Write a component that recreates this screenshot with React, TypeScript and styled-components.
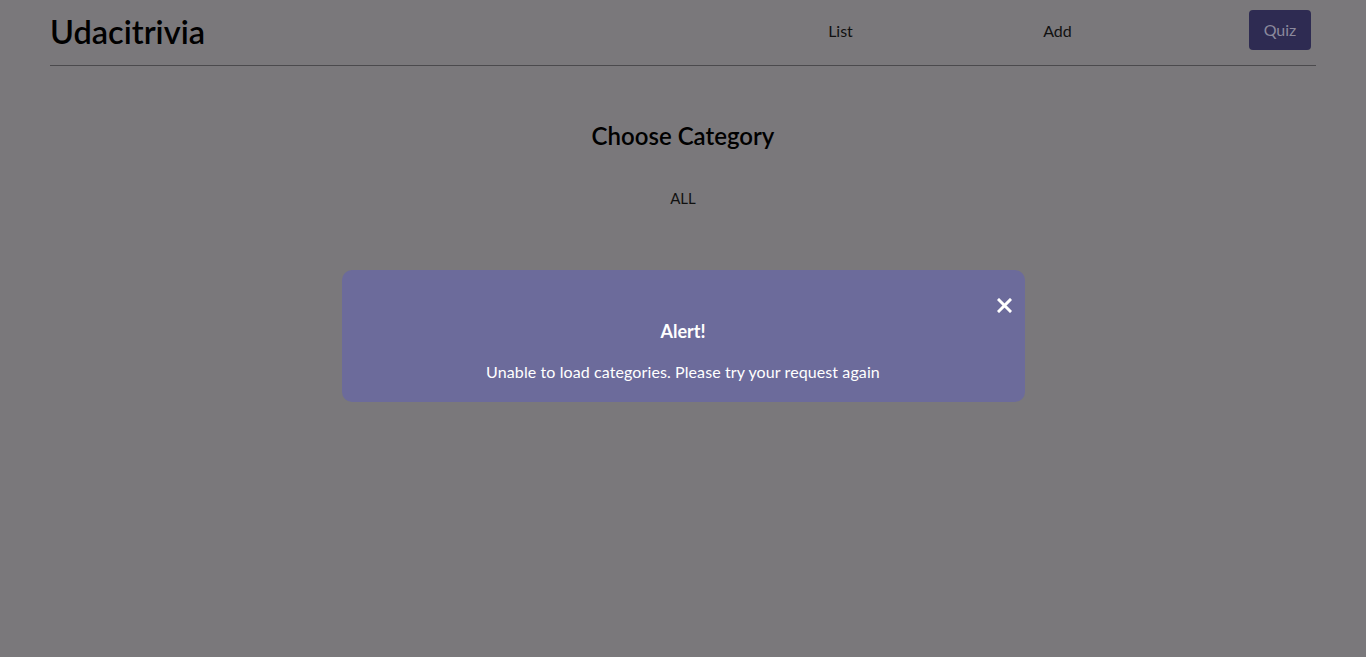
import React from "react";
import styled, { createGlobalStyle } from "styled-components";

const Global = createGlobalStyle`
  html, body { margin: 0; padding: 0; }
  body {
    background: #7a787b;
    font-family: "Lato", "Noto Sans", sans-serif;
    color: #000;
  }
`;

const Page = styled.div`
  min-height: 657px;
  padding: 0 50px;
`;

const Header = styled.header`
  display: flex;
  align-items: center;
  height: 65px;
  border-bottom: 1px solid #4b4a4d;
`;

const Brand = styled.h1`
  margin: 0;
  font-size: 32.5px;
  font-weight: 600;
  flex: 1;
  line-height: 1;
`;

const Nav = styled.nav`
  display: flex;
  align-items: center;
  margin-bottom: 4px;
`;

const NavLink = styled.span<{ $w: number }>`
  width: ${(p) => p.$w}px;
  text-align: center;
  font-size: 16px;
  color: #111;
`;

const QuizButton = styled.button`
  width: 62px;
  height: 40px;
  margin-left: 83px;
  margin-right: 5px;
  margin-bottom: 2px;
  border: none;
  border-radius: 4px;
  background: #2e2b52;
  color: #8b899c;
  font-family: inherit;
  font-size: 16px;
`;

const Main = styled.main`
  display: flex;
  flex-direction: column;
  align-items: center;
  padding-top: 55px;
`;

const Heading = styled.h2`
  margin: 0;
  font-size: 24px;
  font-weight: 600;
`;

const Category = styled.div`
  margin-top: 39px;
  font-size: 15px;
  color: #111;
`;

const Backdrop = styled.div`
  position: fixed;
  inset: 0;
  display: flex;
  justify-content: center;
  align-items: flex-start;
  padding-top: 270px;
`;

const Modal = styled.div`
  position: relative;
  width: 683px;
  height: 132px;
  box-sizing: border-box;
  border-radius: 10px;
  background: #6c6b9b;
  color: #fff;
  display: flex;
  flex-direction: column;
  align-items: center;
  padding-top: 50px;
`;

const Close = styled.button`
  position: absolute;
  top: 25px;
  right: 10px;
  background: none;
  border: none;
  padding: 0;
  width: 20px;
  height: 20px;
  display: flex;
  align-items: center;
  justify-content: center;
`;

const AlertTitle = styled.div`
  font-size: 18px;
  font-weight: 700;
`;

const AlertMessage = styled.div`
  margin-top: 20px;
  font-size: 16px;
  letter-spacing: 0.1px;
`;

export default function App() {
  return (
    <>
      <Global />
      <Page>
        <Header>
          <Brand>Udacitrivia</Brand>
          <Nav>
            <NavLink $w={217}>List</NavLink>
            <NavLink $w={217}>Add</NavLink>
            <QuizButton>Quiz</QuizButton>
          </Nav>
        </Header>
        <Main>
          <Heading>Choose Category</Heading>
          <Category>ALL</Category>
        </Main>
      </Page>
      <Backdrop>
        <Modal>
          <Close aria-label="close">
            <svg width="15" height="15" viewBox="0 0 15 15">
              <path d="M2 2 L13 13 M13 2 L2 13" stroke="#fff" strokeWidth="3" strokeLinecap="square" />
            </svg>
          </Close>
          <AlertTitle>Alert!</AlertTitle>
          <AlertMessage>Unable to load categories. Please try your request again</AlertMessage>
        </Modal>
      </Backdrop>
    </>
  );
}
